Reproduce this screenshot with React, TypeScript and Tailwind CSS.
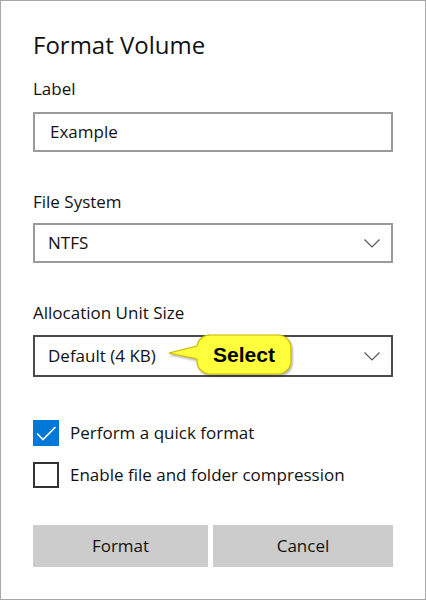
import React from "react";

function Chevron() {
  return (
    <svg width="16" height="9" viewBox="0 0 16 9" className="shrink-0">
      <path d="M0.5 0.5 L8 8 L15.5 0.5" fill="none" stroke="#555" strokeWidth="1.2" />
    </svg>
  );
}

export default function App() {
  return (
    <div className="w-[426px] h-[600px] bg-white border border-[#a8a8a8] pl-[32px] pr-[32px] pt-[28px] font-['Open_Sans',sans-serif] text-[#111] text-[17px] leading-[24px]">
      <h1 className="text-[24px] leading-[32px] font-normal">Format Volume</h1>

      <div className="mt-[16px]">Label</div>
      <div className="mt-[11px] h-[40px] border-2 border-[#9a9a9a] flex items-center pl-[15px]">
        Example
      </div>

      <div className="mt-[38px]">File System</div>
      <div className="mt-[9px] h-[40px] border-2 border-[#9a9a9a] flex items-center justify-between pl-[13px] pr-[11px]">
        <span>NTFS</span>
        <Chevron />
      </div>

      <div className="mt-[38px]">Allocation Unit Size</div>
      <div className="relative mt-[10px] h-[42px] border-2 border-[#4a4a4a] flex items-center justify-between pl-[13px] pr-[11px]">
        <span>Default (4 KB)</span>
        <Chevron />
        <div className="absolute left-[133px] top-[-3px] w-[126px] h-[46px]">
          <svg width="126" height="46" viewBox="0 0 126 46" className="absolute left-0 top-0">
            <defs>
              <filter id="sh" x="-10%" y="-10%" width="130%" height="140%">
                <feDropShadow dx="1" dy="1.5" stdDeviation="1" floodColor="#000" floodOpacity="0.35" />
              </filter>
            </defs>
            <path
              d="M42 1 H110 A13 13 0 0 1 123 14 V27 A13 13 0 0 1 110 40 H42 A13 13 0 0 1 29 27 V25 L1 19 L29 12 A13 13 0 0 1 42 1 Z"
              fill="#ffff3a"
              stroke="#c9b800"
              strokeWidth="1.2"
              filter="url(#sh)"
            />
          </svg>
          <div className="absolute left-[29px] top-[1px] w-[94px] h-[39px] flex items-center justify-center font-['Liberation_Sans',sans-serif] font-bold text-[21px] text-black">
            Select
          </div>
        </div>
      </div>

      <div className="mt-[43px] flex items-center gap-[11px]">
        <div className="w-[26px] h-[26px] bg-[#0078d7] flex items-center justify-center">
          <svg width="26" height="26" viewBox="0 0 26 26">
            <path d="M4 13.5 L10 19.5 L22.5 7" fill="none" stroke="#fff" strokeWidth="1.6" />
          </svg>
        </div>
        <span>Perform a quick format</span>
      </div>
      <div className="mt-[16px] flex items-center gap-[11px]">
        <div className="w-[26px] h-[26px] border-2 border-[#333]"></div>
        <span>Enable file and folder compression</span>
      </div>

      <div className="mt-[37px] flex gap-[5px]">
        <div className="w-[175px] h-[42px] bg-[#cccccc] flex items-center justify-center">Format</div>
        <div className="w-[180px] h-[42px] bg-[#cccccc] flex items-center justify-center">Cancel</div>
      </div>
    </div>
  );
}
